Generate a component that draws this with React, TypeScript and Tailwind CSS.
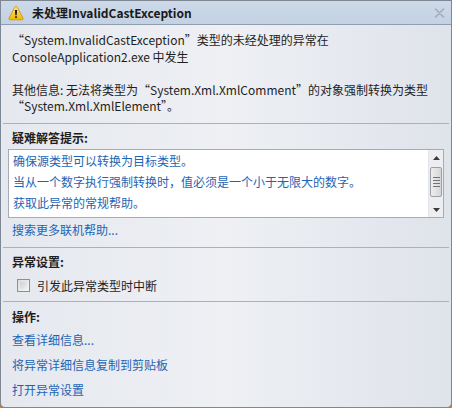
import React from "react";

function WarningIcon() {
  return (
    <svg width="16" height="16" viewBox="0 0 16 16">
      <defs>
        <linearGradient id="wg" x1="0" y1="0" x2="0" y2="1">
          <stop offset="0" stopColor="#ffe680" />
          <stop offset="1" stopColor="#f0b800" />
        </linearGradient>
      </defs>
      <path d="M8 1.2 C8.6 1.2 8.9 1.5 9.2 2 L15 13.2 C15.4 14 15 14.8 14 14.8 L2 14.8 C1 14.8 0.6 14 1 13.2 L6.8 2 C7.1 1.5 7.4 1.2 8 1.2 Z" fill="url(#wg)" stroke="#c99300" strokeWidth="0.8" />
      <path d="M6.9 5 L9.1 5 L8.7 10.2 L7.3 10.2 Z" fill="#1a1a1a" />
      <rect x="7.1" y="11.2" width="1.8" height="1.8" rx="0.4" fill="#1a1a1a" />
    </svg>
  );
}

function CloseIcon() {
  return (
    <svg width="11" height="10" viewBox="0 0 11 10">
      <path d="M1.5 1 L9.5 9 M9.5 1 L1.5 9" stroke="#a3adb9" strokeWidth="1.6" strokeLinecap="round" />
    </svg>
  );
}

function Separator() {
  return <div className="mx-[2px] h-px shrink-0 bg-[#aab1bc]" />;
}

function ScrollBar() {
  return (
    <div className="w-[15px] h-full flex flex-col bg-[#eceef1] border-l border-[#e2e4e8]">
      <div className="h-[17px] flex items-center justify-center">
        <svg width="7" height="4" viewBox="0 0 7 4"><path d="M3.5 0 L7 4 L0 4 Z" fill="#3a3a3a" /></svg>
      </div>
      <div className="mx-[1px] h-[30px] rounded-[2px] border border-[#9a9fa6] bg-gradient-to-r from-[#eeeeee] via-[#e2e2e2] to-[#d6d6d6] flex flex-col items-center justify-center gap-[2px]">
        <div className="w-[7px] h-px bg-[#6e747b]" />
        <div className="w-[7px] h-px bg-[#6e747b]" />
        <div className="w-[7px] h-px bg-[#6e747b]" />
        <div className="w-[7px] h-px bg-[#6e747b]" />
      </div>
      <div className="flex-1" />
      <div className="h-[14px] flex items-center justify-center">
        <svg width="7" height="4" viewBox="0 0 7 4"><path d="M0 0 L7 0 L3.5 4 Z" fill="#3a3a3a" /></svg>
      </div>
    </div>
  );
}

export default function App() {
  return (
    <div className="w-[452px] h-[408px] bg-[#d07a2a]">
      <div className="w-full h-full flex flex-col border border-[#7e8895] rounded-b-[5px] overflow-hidden bg-gradient-to-r from-[#e5e8ee] via-[#eef0f4] to-[#dfe3ea] text-[12px] text-[#1e1e1e] font-['Noto_Sans_CJK_SC',sans-serif]">
        {/* Title bar */}
        <div className="h-[24px] shrink-0 flex items-center bg-gradient-to-b from-[#cdd9e8] to-[#c3d1e3] border-b border-[#8f9db1] pl-[7px] pr-[6px]">
          <WarningIcon />
          <span className="ml-[8px] font-bold text-[12px] text-[#1a1a1a] leading-none">未处理InvalidCastException</span>
          <div className="ml-auto flex items-center">
            <CloseIcon />
          </div>
        </div>

        {/* Message */}
        <div className="shrink-0 px-[11px] pt-[7px] pb-[8px] leading-[16.5px]">
          <div>“System.InvalidCastException”类型的未经处理的异常在</div>
          <div>ConsoleApplication2.exe 中发生</div>
          <div>&nbsp;</div>
          <div>其他信息: 无法将类型为“System.Xml.XmlComment”的对象强制转换为类型</div>
          <div>“System.Xml.XmlElement”。</div>
        </div>

        <Separator />

        {/* Troubleshooting */}
        <div className="shrink-0 pt-[6px] pb-[9px]">
          <div className="px-[11px] font-bold leading-[16px]">疑难解答提示:</div>
          <div className="mx-[7px] mt-[3px] h-[69px] flex bg-white border border-[#a5acb8]">
            <div className="flex-1 pl-[4px] leading-[21px] text-[#1e64b4]">
              <div>确保源类型可以转换为目标类型。</div>
              <div>当从一个数字执行强制转换时，值必须是一个小于无限大的数字。</div>
              <div>获取此异常的常规帮助。</div>
            </div>
            <ScrollBar />
          </div>
          <div className="px-[11px] mt-[4px] leading-[16px] text-[#1e64b4]">搜索更多联机帮助...</div>
        </div>

        <Separator />

        {/* Exception settings */}
        <div className="shrink-0 px-[11px] pt-[6px] pb-[7px]">
          <div className="font-bold leading-[16px]">异常设置:</div>
          <div className="mt-[8px] h-[16px] flex items-center pl-[5px] gap-[7px]">
            <div className="w-[13px] h-[13px] border border-[#8e8f8f] bg-gradient-to-br from-[#dcdcdc] to-[#f6f6f6] p-[2px]">
              <div className="w-full h-full bg-gradient-to-br from-[#cfd1d4] to-[#eeeeee]" />
            </div>
            <span className="leading-[16px]">引发此异常类型时中断</span>
          </div>
        </div>

        <Separator />

        {/* Actions */}
        <div className="shrink-0 px-[11px] pt-[7px]">
          <div className="font-bold leading-[16px]">操作:</div>
          <div className="mt-[2px] leading-[25px] text-[#1e64b4]">
            <div>查看详细信息...</div>
            <div>将异常详细信息复制到剪贴板</div>
            <div>打开异常设置</div>
          </div>
        </div>
      </div>
    </div>
  );
}
